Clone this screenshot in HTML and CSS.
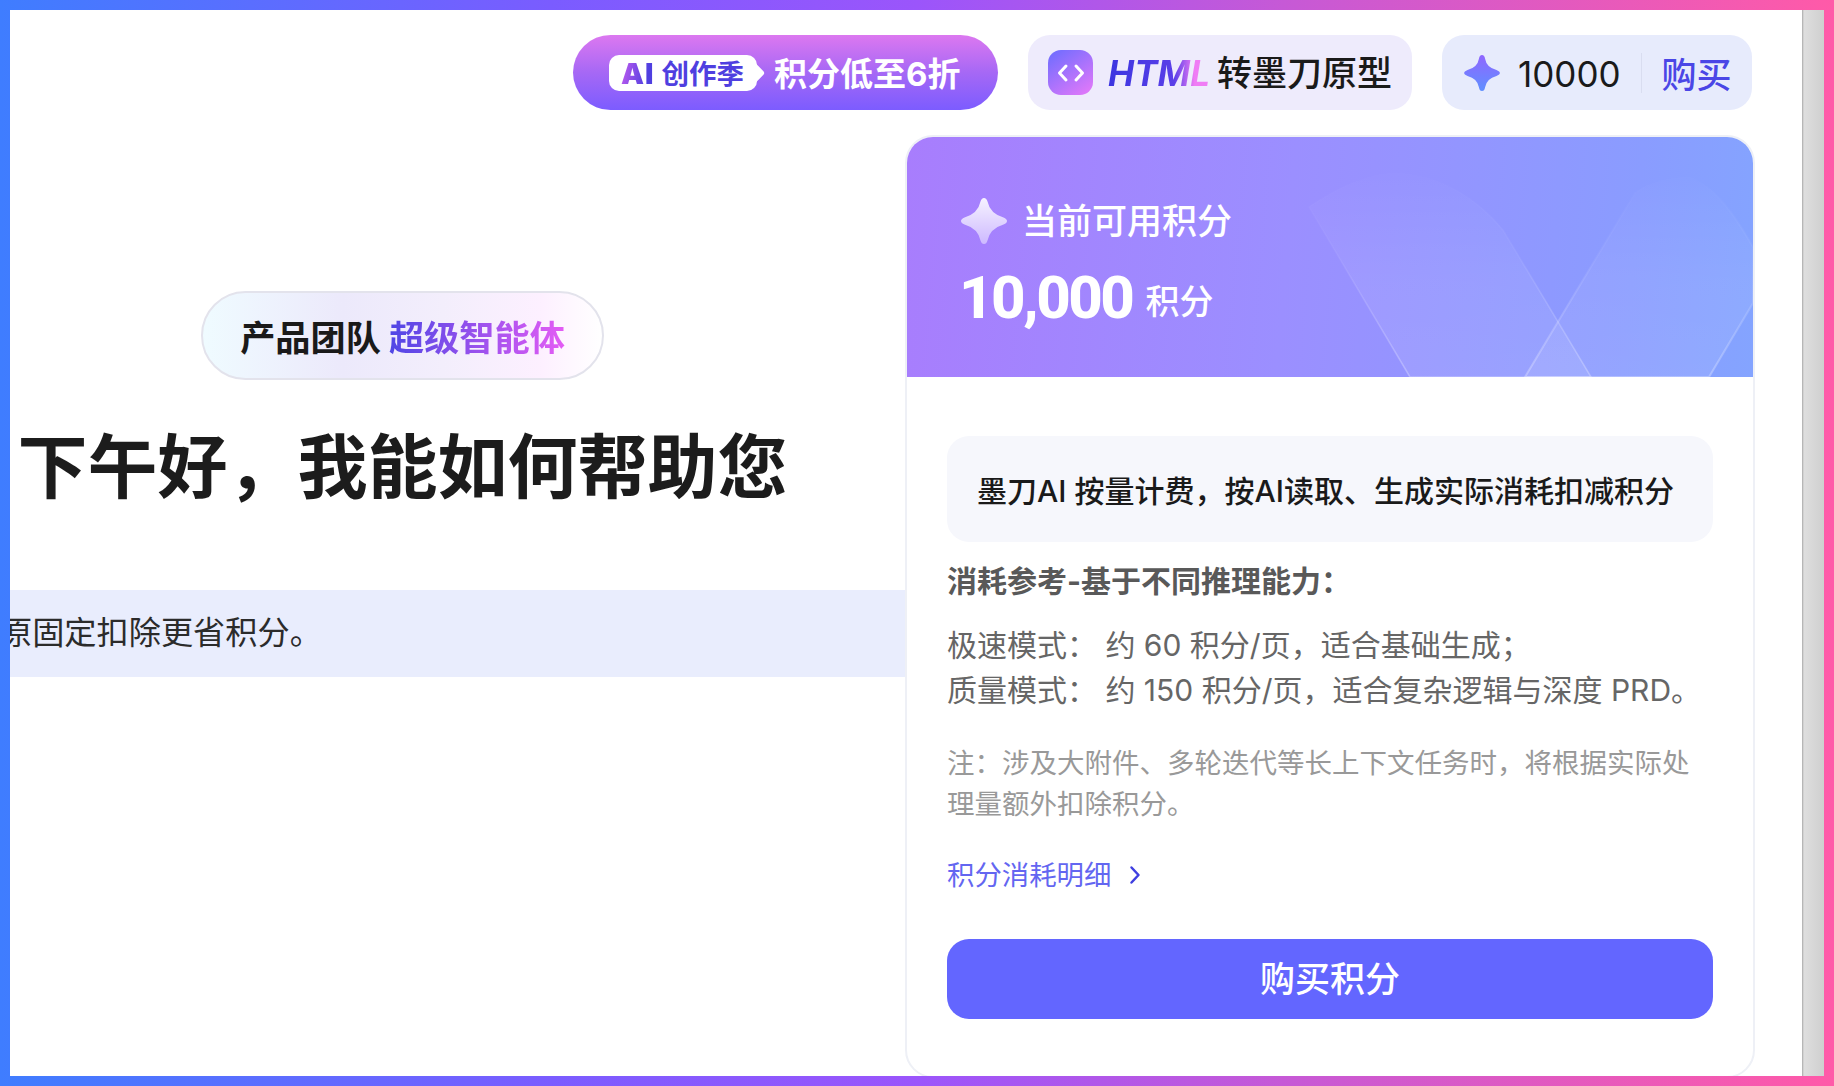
FILE: index.html

```html
<!DOCTYPE html>
<html lang="zh-CN">
<head>
  <meta charset="UTF-8">
  <title>墨刀AI</title>
  <link rel="stylesheet" href="styles.css">
</head>
<body>
  <div class="frame">
    <div class="page">
      <div class="main">

        <div class="topbar">
          <div class="promo">
            <span class="promo-tag"><b class="promo-ai">AI</b><span class="promo-season">创作季</span></span>
            <span class="promo-text">积分低至6折</span>
          </div>
          <div class="convert">
            <span class="convert-icon">
              <svg width="28" height="20" viewBox="0 0 28 20" fill="none" stroke="#fff" stroke-width="3" stroke-linecap="round" stroke-linejoin="round">
                <path d="M9 3 2.500 10 9 17"/>
                <path d="M19 3 25.500 10 19 17"/>
              </svg>
            </span>
            <span class="convert-html">HTML</span>
            <span class="convert-text">转墨刀原型</span>
          </div>
          <div class="credits">
            <svg class="credits-star" width="36" height="36" viewBox="0 0 36 36">
              <defs>
                <linearGradient id="starTop" x1="0" y1="0" x2="0" y2="1">
                  <stop offset="0" stop-color="#9066ff"/>
                  <stop offset="1" stop-color="#5f8fff"/>
                </linearGradient>
              </defs>
              <path fill="url(#starTop)" d="M18 0Q20.500 0 21 3.500Q22.500 12.500 32.500 15Q36 16.500 36 18Q36 19.500 32.500 21Q22.500 23.500 21 32.500Q20.500 36 18 36Q15.500 36 15 32.500Q13.500 23.500 3.500 21Q0 19.500 0 18Q0 16.500 3.500 15Q13.500 12.500 15 3.500Q15.500 0 18 0Z"/>
            </svg>
            <span class="credits-num">10000</span>
            <span class="credits-line"></span>
            <span class="credits-buy">购买</span>
          </div>
        </div>

        <div class="content">
          <div class="left">
            <div class="hero">
              <div class="badge">产品团队 <span class="badge-hi">超级智能体</span></div>
              <h1 class="title">下午好，我能如何帮助您</h1>
            </div>
            <div class="notice"><span class="notice-text">原固定扣除更省积分。</span></div>
          </div>

          <div class="card">
            <div class="card-head">
              <svg class="card-deco" width="847" height="240" viewBox="0 0 847 240">
                <defs>
                  <linearGradient id="decoFill" x1="0" y1="0" x2="0" y2="1">
                    <stop offset="0" stop-color="#fff" stop-opacity=".01"/>
                    <stop offset=".5" stop-color="#fff" stop-opacity=".07"/>
                    <stop offset="1" stop-color="#fff" stop-opacity=".09"/>
                  </linearGradient>
                  <linearGradient id="decoLine" x1="0" y1="0" x2="0" y2="1">
                    <stop offset="0" stop-color="#fff" stop-opacity="0"/>
                    <stop offset=".4" stop-color="#fff" stop-opacity=".05"/>
                    <stop offset="1" stop-color="#fff" stop-opacity=".28"/>
                  </linearGradient>
                </defs>
                <path d="M403 70C430 52 462 36 488 36 530 36 570 60 597 93L685 240H504Z" fill="url(#decoFill)" stroke="url(#decoLine)" stroke-width="1.500"/>
                <path d="M619 240 729 56C745 44 765 40 784 40 810 50 830 80 847 110V166L803 240Z" fill="url(#decoFill)" stroke="url(#decoLine)" stroke-width="2"/>
              </svg>
              <div class="head-row">
                <svg width="46" height="46" viewBox="0 0 46 46">
                  <defs>
                    <linearGradient id="starHead" x1="0" y1="0" x2="0" y2="1">
                      <stop offset="0" stop-color="#f6f2ff"/>
                      <stop offset="1" stop-color="#cdb9ff"/>
                    </linearGradient>
                  </defs>
                  <path fill="url(#starHead)" d="M23 0Q25.500 0 26.500 3.500Q29 15.500 42.500 19.500Q46 21 46 23Q46 25 42.500 26.500Q29 30.500 26.500 42.500Q25.500 46 23 46Q20.500 46 19.500 42.500Q17 30.500 3.500 26.500Q0 25 0 23Q0 21 3.500 19.500Q17 15.500 19.500 3.500Q20.500 0 23 0Z"/>
                </svg>
                <span class="head-label">当前可用积分</span>
              </div>
              <div class="head-amount"><span class="head-num">10,000</span><span class="head-unit">积分</span></div>
            </div>

            <div class="card-body">
              <div class="info">墨刀AI 按量计费，按AI读取、生成实际消耗扣减积分</div>
              <div class="ref-title">消耗参考-基于不同推理能力：</div>
              <div class="ref-lines">
                <div>极速模式： 约 60 积分/页，适合基础生成；</div>
                <div>质量模式： 约 150 积分/页，适合复杂逻辑与深度 PRD。</div>
              </div>
              <p class="note">注：涉及大附件、多轮迭代等长上下文任务时，将根据实际处理量额外扣除积分。</p>
              <a class="detail">积分消耗明细
                <svg width="12" height="20" viewBox="0 0 12 20" fill="none" stroke="#3f3fe0" stroke-width="2.500" stroke-linecap="round" stroke-linejoin="round"><path d="M2.500 2.500 9.500 10 2.500 17.500"/></svg>
              </a>
              <div class="buy"><span class="buy-text">购买积分</span></div>
            </div>
          </div>
        </div>

      </div>
      <div class="scrollbar"></div>
    </div>
  </div>
</body>
</html>
```

FILE: styles.css

```css
* { box-sizing: border-box; }

html, body {
  margin: 0;
  height: 100%;
  overflow: hidden;
}

body {
  font-family: Inter, "Noto Sans CJK SC", sans-serif;
  color: #1a1a1a;
}

.frame {
  height: 1086px;
  padding: 10px;
  background: linear-gradient(90deg, #3f7dff 0%, #7a5cff 30%, #9b55fb 50%, #c659d6 70%, #ff5aa8 100%);
}

.page {
  height: 100%;
  display: flex;
  background: #fff;
  overflow: hidden;
}

.main {
  flex: 1;
  min-width: 0;
  display: flex;
  flex-direction: column;
}

.scrollbar {
  width: 22px;
  background: linear-gradient(90deg, #a9a9a9 0, #dedede 2px, #cfcfcf 100%);
}

/* top bar */
.topbar {
  display: flex;
  justify-content: flex-end;
  gap: 30px;
  padding: 25px 50px 0 0;
  flex: none;
}

.promo {
  width: 425px;
  height: 75px;
  border-radius: 38px;
  display: flex;
  align-items: center;
  padding-left: 36px;
  background: linear-gradient(180deg, #dc78f0 0%, #a668f5 50%, #7c5cff 100%);
}

.promo-tag {
  position: relative;
  width: 148px;
  height: 36px;
  border-radius: 10px;
  background: #fff;
  display: flex;
  align-items: center;
  padding-left: 12px;
  gap: 7px;
}

.promo-tag::after {
  content: "";
  position: absolute;
  right: -5px;
  top: 10px;
  width: 16px;
  height: 16px;
  background: #fff;
  border-radius: 3px;
  transform: rotate(45deg);
}

.promo-ai {
  font-size: 29px;
  font-weight: 900;
  line-height: 1;
  letter-spacing: 1px;
  margin-top: 2px;
  background: linear-gradient(100deg, #c45cf0 0%, #4f3fe0 75%);
  -webkit-background-clip: text;
  background-clip: text;
  color: transparent;
}

.promo-season {
  font-size: 27.500px;
  font-weight: 700;
  line-height: 1;
  margin-top: 4px;
  color: #4f3fe0;
  position: relative;
  z-index: 1;
}

.promo-text {
  margin: 0 0 2px 17px;
  color: #fff;
  font-size: 33px;
  font-weight: 700;
}

.convert {
  width: 384px;
  height: 75px;
  border-radius: 22px;
  background: #eeebfc;
  display: flex;
  align-items: center;
  padding-left: 20px;
}

.convert-icon {
  width: 45px;
  height: 45px;
  border-radius: 13px;
  background: linear-gradient(145deg, #6a6cff 0%, #e879f9 100%);
  display: flex;
  align-items: center;
  justify-content: center;
}

.convert-html {
  margin-left: 15px;
  font-size: 35px;
  font-weight: 700;
  font-style: italic;
  background: linear-gradient(90deg, #3b34e0 0%, #5a3fe8 65%, #f07cf5 85%);
  -webkit-background-clip: text;
  background-clip: text;
  color: transparent;
}

.convert-text {
  margin: 0 0 4px 7px;
  font-size: 35px;
  font-weight: 500;
}

.credits {
  width: 310px;
  height: 75px;
  border-radius: 22px;
  background: #e7ebfc;
  display: flex;
  align-items: center;
  padding-left: 22px;
}

.credits-num {
  margin: 2px 0 0 18px;
  font-size: 35px;
}

.credits-line {
  width: 1px;
  height: 40px;
  margin-left: 20px;
  background: #d9ddf0;
}

.credits-buy {
  margin-left: 20px;
  font-size: 35px;
  font-weight: 500;
  color: #4a46e6;
}

/* content */
.content {
  flex: 1;
  min-height: 0;
  display: flex;
  margin-top: 25px;
  padding-right: 47px;
}

.left {
  width: 895px;
  flex: none;
  overflow: hidden;
}

.hero {
  padding: 156px 110px 0 0;
  display: flex;
  flex-direction: column;
  align-items: center;
}

.badge {
  height: 89px;
  width: 403px;
  border-radius: 45px;
  border: 2px solid #e3e3ec;
  display: flex;
  align-items: center;
  justify-content: center;
  gap: 8px;
  font-size: 35.200px;
  font-weight: 600;
  white-space: nowrap;
  background: linear-gradient(90deg, #effbff 0%, #ece9fb 35%, #f3eefc 60%, #fdf0ff 85%, #fff 100%);
}

.badge-hi {
  background: linear-gradient(90deg, #4f46e5, #e45cf5);
  -webkit-background-clip: text;
  background-clip: text;
  color: transparent;
}

.title {
  margin: 38px 0 0;
  font-size: 70px;
  line-height: 100px;
  font-weight: 700;
  white-space: nowrap;
  color: #1c1c1c;
}

.notice {
  height: 87px;
  margin-top: 72px;
  background: #e9edfd;
  display: flex;
  align-items: center;
  font-size: 32.200px;
  color: #2b2b2b;
  white-space: nowrap;
}

.notice-text {
  margin: 0 0 7px -10px;
}

/* card */
.card {
  width: 850px;
  height: 943px;
  flex: none;
  border-radius: 28px;
  border: 2px solid #eef0f6;
  overflow: hidden;
  background: #fff;
}

.card-head {
  position: relative;
  height: 240px;
  padding: 61px 0 0 54px;
  color: #fff;
  background: linear-gradient(95deg, #a87dfd 0%, #9b8fff 45%, #8a9cff 85%, #84a4ff 100%);
  overflow: hidden;
}

.card-deco {
  position: absolute;
  left: -1px;
  top: 0;
}

.head-row {
  position: relative;
  display: flex;
  align-items: center;
  gap: 15px;
  font-size: 35px;
  font-weight: 500;
  line-height: 46px;
}

.head-amount {
  position: relative;
  display: flex;
  align-items: center;
  margin-top: 19px;
}

.head-num {
  margin-left: -2px;
  font-family: Roboto, sans-serif;
  font-size: 60px;
  font-weight: 800;
  line-height: 70px;
  letter-spacing: -2.500px;
}

.head-unit {
  margin: 3px 0 0 13px;
  font-size: 34px;
  font-weight: 500;
}

.card-body {
  padding: 59px 40px 0;
}

.info {
  height: 106px;
  border-radius: 22px;
  background: #f6f7fc;
  display: flex;
  align-items: center;
  padding-left: 30px;
  font-size: 30px;
  font-weight: 500;
  white-space: nowrap;
}

.ref-title {
  margin-top: 18px;
  font-size: 30px;
  font-weight: 700;
  line-height: 42px;
  color: #595959;
}

.ref-lines {
  margin-top: 21px;
  font-size: 30px;
  line-height: 45px;
  color: #666;
  white-space: nowrap;
}

.note {
  margin: 30px 0 0;
  font-size: 27.500px;
  line-height: 41px;
  color: #999;
}

.detail {
  display: flex;
  align-items: center;
  gap: 18px;
  margin-top: 30px;
  font-size: 27.400px;
  line-height: 40px;
  color: #6366f1;
}

.buy {
  height: 80px;
  margin-top: 44px;
  border-radius: 22px;
  background: #6366ff;
  color: #fff;
  font-size: 35px;
  font-weight: 500;
  display: flex;
  align-items: center;
  justify-content: center;
}

.buy-text {
  margin-bottom: 5px;
}
```
